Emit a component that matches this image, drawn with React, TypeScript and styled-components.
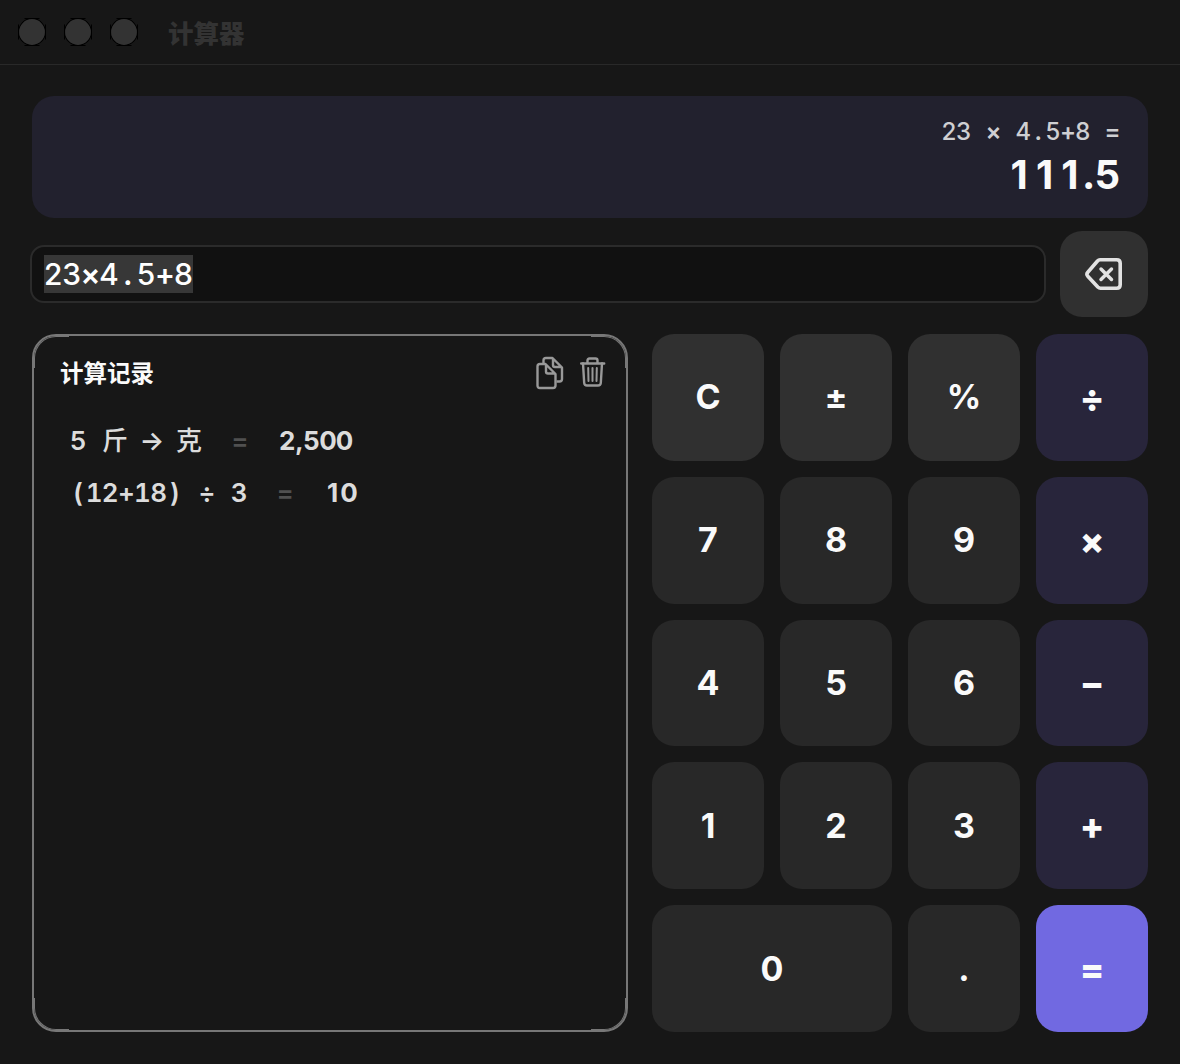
import styled, { createGlobalStyle } from 'styled-components';

type KeyTone = 'number' | 'function' | 'operator' | 'equals';

const KEYS: { label: string; tone: KeyTone; span?: number }[] = [
  { label: 'C', tone: 'function' },
  { label: '±', tone: 'function' },
  { label: '%', tone: 'function' },
  { label: '÷', tone: 'operator' },
  { label: '7', tone: 'number' },
  { label: '8', tone: 'number' },
  { label: '9', tone: 'number' },
  { label: '×', tone: 'operator' },
  { label: '4', tone: 'number' },
  { label: '5', tone: 'number' },
  { label: '6', tone: 'number' },
  { label: '−', tone: 'operator' },
  { label: '1', tone: 'number' },
  { label: '2', tone: 'number' },
  { label: '3', tone: 'number' },
  { label: '+', tone: 'operator' },
  { label: '0', tone: 'number', span: 2 },
  { label: '.', tone: 'number' },
  { label: '=', tone: 'equals' },
];

const HISTORY = [
  { expression: '5 斤 → 克', result: '2,500' },
  { expression: '(12+18) ÷ 3', result: '10' },
];

const KEY_COLORS: Record<KeyTone, string> = {
  number: '#282828',
  function: '#303030',
  operator: '#28253b',
  equals: '#7169e1',
};

export default function App() {
  return (
    <Window>
      <GlobalStyle />
      <TitleBar>
        <WindowButtons>
          <WindowButton />
          <WindowButton />
          <WindowButton />
        </WindowButtons>
        <WindowTitle>计算器</WindowTitle>
      </TitleBar>

      <Content>
        <Display>
          <DisplayExpression>
            <Mono text="23 × 4.5+8 =" />
          </DisplayExpression>
          <DisplayResult>
            <Amount text="111.5" />
          </DisplayResult>
        </Display>

        <InputRow>
          <InputBox>
            <Selection>
              <Mono text="23×4.5+8" />
            </Selection>
          </InputBox>
          <BackspaceButton aria-label="退格">
            <BackspaceIcon />
          </BackspaceButton>
        </InputRow>

        <Body>
          <HistoryPanel>
            <Corner $top $left />
            <Corner $top />
            <Corner $left />
            <Corner />
            <HistoryHeader>
              <HistoryTitle>计算记录</HistoryTitle>
              <HistoryActions>
                <CopyIcon />
                <TrashIcon />
              </HistoryActions>
            </HistoryHeader>
            <HistoryList>
              {HISTORY.map(item => (
                <HistoryRow key={item.expression}>
                  <HistoryExpression>
                    <Mono text={item.expression} />
                  </HistoryExpression>
                  <HistoryEquals>
                    <Mono text="=" />
                  </HistoryEquals>
                  <HistoryResult>
                    <Amount text={item.result} />
                  </HistoryResult>
                </HistoryRow>
              ))}
            </HistoryList>
          </HistoryPanel>

          <Keypad>
            {KEYS.map(({ label, tone, span }) => (
              <Key key={label} $tone={tone} $span={span}>
                {label}
              </Key>
            ))}
          </Keypad>
        </Body>
      </Content>
    </Window>
  );
}

const isHan = (char: string) => /[\u4e00-\u9fff]/.test(char);

const cellWeight = (char: string) => {
  if (isHan(char)) return 500;
  return /[.+×÷=→]/.test(char) ? 600 : undefined;
};

// every character gets the same advance, CJK ones stay a bit under 1em
function Mono({ text }: { text: string }) {
  return (
    <MonoText>
      {[...text].map((char, index) => (
        <Cell key={index} $width={isHan(char) ? 0.985 : 0.62} $weight={cellWeight(char)}>
          {char}
        </Cell>
      ))}
    </MonoText>
  );
}

function Amount({ text }: { text: string }) {
  return (
    <span>
      {[...text].map((char, index) => (
        <Cell key={index} $width={/\d/.test(char) ? 0.635 : 0.3}>
          {char}
        </Cell>
      ))}
    </span>
  );
}

function WindowButton() {
  return (
    <svg width="28" height="28" viewBox="0 0 28 28" fill="none">
      <path d="M6.500 .5H21.500M6.500 27.500H21.500M.5 6.500V21.500M27.500 6.500V21.500" stroke="#000" />
      <circle cx="14" cy="14" r="13.300" stroke="#000" strokeWidth="1.200" />
      <circle cx="14" cy="14" r="12.900" fill="#333" />
    </svg>
  );
}

function BackspaceIcon() {
  return (
    <svg width="38" height="32" viewBox="0 0 38 32" fill="none" stroke="#e2e2e2" strokeLinecap="round" strokeLinejoin="round">
      <path
        d="M15 1.800H31.700Q35.200 1.800 35.200 5.300V26.700Q35.200 30.200 31.700 30.200H15.500Q14 30.200 12.800 29L2.800 18.200Q1 16.200 2.800 14.200L12.500 3Q13.600 1.800 15 1.800Z"
        strokeWidth="3.6"
      />
      <path d="M16 11L26.500 21.500M26.500 11L16 21.500" strokeWidth="3.500" />
    </svg>
  );
}

function CopyIcon() {
  return (
    <svg width="28" height="34" viewBox="0 0 28 34" fill="none" stroke="#999" strokeWidth="2.4" strokeLinejoin="round">
      <path d="M7.500 8V4.500Q7.500 2 10 2H16.500L26 11.500V23Q26 25.500 23.500 25.500H20.500M17 2V9Q17 11 19 11H26" />
      <path d="M4 8H9.500L19.500 18V29.500Q19.500 32 17 32H4Q1.500 32 1.500 29.500V10.500Q1.500 8 4 8ZM10 8V15.500Q10 17.500 12 17.500H19.500" />
    </svg>
  );
}

function TrashIcon() {
  return (
    <svg width="26" height="30" viewBox="0 0 26 30" fill="none" stroke="#999" strokeWidth="2.4" strokeLinecap="round" strokeLinejoin="round">
      <path d="M1.200 6.500H24.200M7.500 6V3.500Q7.500 1.500 9.500 1.500H15.500Q17.500 1.500 17.500 3.500V6" />
      <path d="M3 6.500L4.200 26Q4.400 28.500 7 28.500H18Q20.600 28.500 20.800 26L22 6.500" />
      <path d="M8.200 11L8.500 24M12.500 11V24M16.800 11L16.500 24" strokeWidth="2" />
    </svg>
  );
}

const GlobalStyle = createGlobalStyle`
  * {
    box-sizing: border-box;
  }

  body {
    margin: 0;
    background-color: #171717;
    color: #fafafa;
    font-family: Inter, 'Noto Sans CJK SC', sans-serif;
  }

  button {
    border: 0;
    padding: 0;
    color: inherit;
    font-family: inherit;
  }

  svg {
    display: block;
  }
`;

const Window = styled.div`
  display: flex;
  flex-direction: column;
  width: 1180px;
  height: 1064px;
  background-color: #171717;
`;

const TitleBar = styled.header`
  display: flex;
  align-items: center;
  gap: 30px;
  height: 65px;
  padding-left: 18px;
  border-bottom: 1px solid #292929;
`;

const WindowButtons = styled.div`
  display: flex;
  gap: 18px;
`;

const WindowTitle = styled.h1`
  margin: 4px 0 0;
  color: #333;
  font-size: 25.5px;
  font-weight: 800;
  line-height: 32px;
`;

const Content = styled.main`
  display: flex;
  flex: 1;
  flex-direction: column;
  padding: 31px 32px 32px;
`;

const MonoText = styled.span`
  font-variant-numeric: tabular-nums;
`;

const Cell = styled.span<{ $width: number; $weight?: number }>`
  display: inline-flex;
  justify-content: center;
  width: ${props => props.$width}em;
  font-weight: ${props => props.$weight ?? 'inherit'};
  white-space: pre;
`;

const Display = styled.section`
  display: flex;
  flex-direction: column;
  align-items: flex-end;
  height: 122px;
  padding: 21px 28px 0;
  border-radius: 22px;
  background-color: #22212e;
`;

const DisplayExpression = styled.div`
  color: #cfcfd2;
  font-size: 24px;
  font-weight: 500;
  line-height: 30px;
`;

const DisplayResult = styled.div`
  font-size: 40px;
  font-weight: 700;
  line-height: 56px;
`;

const InputRow = styled.div`
  display: flex;
  align-items: center;
  gap: 14px;
  margin: 13px 0 17px -2px;
`;

const InputBox = styled.div`
  display: flex;
  flex: 1;
  align-items: center;
  height: 58px;
  padding-left: 12px;
  border: 2px solid #2b2b2b;
  border-radius: 14px;
  background-color: #111;
`;

const Selection = styled.span`
  height: 38px;
  background-color: #373737;
  color: #fff;
  font-size: 30px;
  font-weight: 500;
  line-height: 38px;
`;

const BackspaceButton = styled.button`
  display: grid;
  place-items: center;
  width: 88px;
  height: 86px;
  border-radius: 22px;
  background-color: #303030;
`;

const Body = styled.div`
  display: flex;
  flex: 1;
  gap: 24px;
`;

const HistoryPanel = styled.section`
  position: relative;
  width: 596px;
  border: 2px solid #777;
  border-radius: 24px;
`;

// extra hairline inside each rounded corner of the panel
const Corner = styled.span<{ $top?: boolean; $left?: boolean }>`
  position: absolute;
  ${props => (props.$top ? 'top: 0' : 'bottom: 0')};
  ${props => (props.$left ? 'left: 0' : 'right: 0')};
  width: 35px;
  height: 32px;
  border: 0 solid #777;
  ${props => (props.$top ? 'border-top-width: 1px' : 'border-bottom-width: 1px')};
  ${props => (props.$left ? 'border-left-width: 1px' : 'border-right-width: 1px')};
  border-${props => (props.$top ? 'top' : 'bottom')}-${props => (props.$left ? 'left' : 'right')}-radius: 22px;
`;

const HistoryHeader = styled.div`
  display: flex;
  align-items: center;
  justify-content: space-between;
  height: 74px;
  padding: 0 20px 0 26px;
`;

const HistoryTitle = styled.h2`
  margin: 2px 0 0;
  font-size: 23.5px;
  font-weight: 700;
  line-height: 32px;
`;

const HistoryActions = styled.div`
  display: flex;
  align-items: center;
  gap: 16px;

  svg:last-child {
    margin-bottom: 2px;
  }
`;

const HistoryList = styled.div`
  padding: 5px 36px;
`;

const HistoryRow = styled.div`
  display: flex;
  align-items: center;
  height: 52px;
  color: #dcdcdc;
  font-size: 26px;
  line-height: 32px;
`;

const HistoryExpression = styled.span`
  font-weight: 600;
`;

const HistoryEquals = styled.span`
  margin: 0 31px 0 30px;
  color: #505050;
`;

const HistoryResult = styled.span`
  font-weight: 700;
`;

const Keypad = styled.div`
  display: grid;
  flex: 1;
  grid-template-columns: repeat(4, 1fr);
  grid-template-rows: repeat(5, 1fr);
  gap: 16px;
`;

const Key = styled.button<{ $tone: KeyTone; $span?: number }>`
  grid-column: span ${props => props.$span ?? 1};
  padding: ${props => (props.$tone === 'operator' || props.$tone === 'equals' ? '1px 0 0' : '0 0 1px')};
  border-radius: 22px;
  background-color: ${props => KEY_COLORS[props.$tone]};
  font-size: ${props => (props.$tone === 'operator' || props.$tone === 'equals' ? 36 : 34)}px;
  font-weight: ${props => (props.$tone === 'operator' || props.$tone === 'equals' ? 800 : 650)};
`;
